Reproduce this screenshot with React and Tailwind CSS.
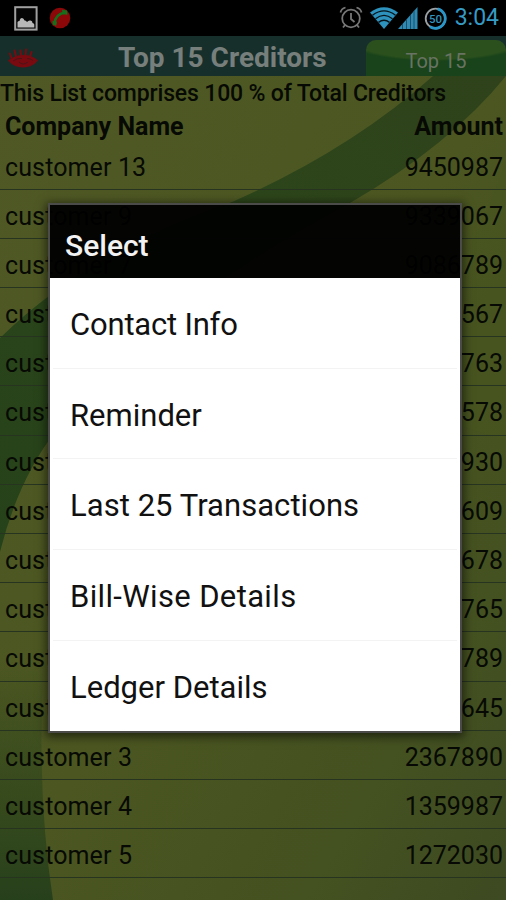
const ROWS = [
  ["customer 13", "9450987"],
  ["customer 9", "9339067"],
  ["customer 7", "9086789"],
  ["customer 2", "8234567"],
  ["customer 8", "7865763"],
  ["customer 6", "6734578"],
  ["customer 1", "5678930"],
  ["customer 10", "4567609"],
  ["customer 11", "4345678"],
  ["customer 12", "3456765"],
  ["customer 14", "3245789"],
  ["customer 15", "2845645"],
  ["customer 3", "2367890"],
  ["customer 4", "1359987"],
  ["customer 5", "1272030"],
];

const OPTIONS = [
  { label: "Contact Info", tracking: "tracking-[-0.2px]" },
  { label: "Reminder", tracking: "tracking-normal" },
  { label: "Last 25 Transactions", tracking: "tracking-[0.05px]" },
  { label: "Bill-Wise Details", tracking: "tracking-[0.35px]" },
  { label: "Ledger Details", tracking: "tracking-normal" },
];

const GalleryIcon = () => (
  <svg width="24" height="25" viewBox="0 0 24 25">
    <rect x="1.2" y="1.2" width="21.4" height="22.4" fill="#050505" stroke="#a0a0a0" strokeWidth="2" />
    <path d="M3.500 21.500V16q.5-1 2-1 .5-3 2.500-3 1.800 0 2.500 2.500 1.500-.5 2.500 1.500 1.500-2 3.500-1.500 2 .3 2 2.500 1.500 0 1.800 1.500v3z" fill="#b8b8b8" />
  </svg>
);

const CallIcon = () => (
  <svg width="22" height="22" viewBox="0 0 22 22">
    <circle cx="11" cy="11" r="10.3" fill="#8c0808" />
    <path d="M5.500 16.500C6 10.500 9.500 6.500 16.500 5.500" fill="none" stroke="#14701c" strokeWidth="2.600" />
    <path d="M3.500 13.800l4.500 1-.8 4-3.500-1zM13 2.800l5 .8.5 4.200-4.800-.6z" fill="#14701c" />
  </svg>
);

const AlarmIcon = () => (
  <svg width="24" height="24" viewBox="0 0 24 24" fill="none" stroke="#777" strokeWidth="1.800">
    <circle cx="12" cy="12.500" r="8.800" />
    <path d="M12 7v6l3.500 3M1.500 6.500C2 4 4 2.200 6.500 1.500M17.500 1.500C20 2.200 22 4 22.500 6.500M6 19l-2 2.500M18 19l2 2.500" />
  </svg>
);

const WifiIcon = () => (
  <svg width="28" height="22" viewBox="0 0 28 22">
    <path d="M0 5.500Q14-5 28 5.500L14 22z" fill="#2d92bd" />
    <path d="M2.500 8.200Q14-.5 25.500 8.200M5.500 11.800Q14 5 22.500 11.800M8.500 15.400Q14 11 19.500 15.400" fill="none" stroke="#06131a" strokeWidth="1.400" />
  </svg>
);

const SignalIcon = () => (
  <svg width="20" height="22" viewBox="0 0 20 22">
    <path d="M0 22L19.500 0v22z" fill="#2f89b0" />
    <path d="M4.500 17v5M8.500 12.500V22M12.500 8v14M16 4v18" stroke="#1b506a" strokeWidth="1" />
  </svg>
);

const BatteryIcon = () => (
  <svg width="23" height="23" viewBox="0 0 23 23">
    <circle cx="11.500" cy="11.500" r="9.800" fill="none" stroke="#9aa0a3" strokeWidth="1.800" />
    <path d="M13.500 1.800A9.900 9.900 0 1 1 6 19.800" fill="none" stroke="#2a96c8" strokeWidth="2.800" />
    <text x="11.500" y="15.500" textAnchor="middle" fontSize="11.500" fontWeight="500" fontFamily="Roboto, sans-serif" fill="#3293bd">50</text>
  </svg>
);

const EyeLogo = () => (
  <svg width="31" height="21" viewBox="0 0 31 21">
    <path d="M0 12.500Q7 7 15.500 7T30 12.500Q24 19.500 15 19.500T0 12.500z" fill="#790b10" />
    <path d="M3.500 10L1.800 5.500M8 8L6.500 2.500M13 7l-.6-4.500M17.500 7l.5-5.500M22 8.500l1.500-4.500" stroke="#790b10" strokeWidth="2" strokeLinecap="round" />
    <path d="M5 13q5-3.500 9-2.500M19 10.500q4 0 6 2M11 14q4 4 9 0" fill="none" stroke="#4a1418" strokeWidth="1" />
  </svg>
);

const Backdrop = () => (
  <svg className="absolute inset-0 -z-10" width="506" height="824" viewBox="0 76 506 824">
    <defs>
      <linearGradient id="field" x1="0" y1="0" x2="1" y2="1">
        <stop offset="0" stopColor="#505925" />
        <stop offset="0.5" stopColor="#4b5621" />
        <stop offset="0.8" stopColor="#445120" />
        <stop offset="1" stopColor="#3d4a22" />
      </linearGradient>
      <linearGradient id="band" x1="1" y1="0" x2="0" y2="1">
        <stop offset="0" stopColor="#2f421b" />
        <stop offset="0.5" stopColor="#2c461a" />
        <stop offset="1" stopColor="#26421a" />
      </linearGradient>
      <linearGradient id="corner" x1="0" y1="0" x2="0" y2="1">
        <stop offset="0" stopColor="#2c441a" stopOpacity="0" />
        <stop offset="0.5" stopColor="#2c441a" stopOpacity="0.6" />
        <stop offset="1" stopColor="#27401c" />
      </linearGradient>
    </defs>
    <path d="M0 76h506v824H0z" fill="url(#field)" />
    <path d="M506 160Q490 210 466 255L440 420 506 440z" fill="#48551f" opacity="0.6" />
    <path d="M433 76Q350 150 232 202Q90 250 0 338V552Q18 480 55 432Q150 310 350 203Q450 145 506 76z" fill="url(#band)" />
    <path d="M0 660H44Q36 790 53 900H0z" fill="url(#corner)" />
  </svg>
);

const StatusBar = () => (
  <div className="flex h-9 items-center bg-black">
    <div className="flex flex-1 items-center gap-[11px] pl-3.5">
      <GalleryIcon />
      <CallIcon />
    </div>
    <div className="flex items-center pr-[7px]">
      <AlarmIcon />
      <div className="ml-[7px] flex items-center"><WifiIcon /><SignalIcon /></div>
      <div className="ml-1.5"><BatteryIcon /></div>
      <span className="ml-2 text-[23px] leading-[38px] text-[#359bc5]">3:04</span>
    </div>
  </div>
);

const TitleBar = () => (
  <div className="flex h-10 bg-[#172f2b]">
    <div className="flex w-[118px] items-center pl-2 pt-1"><EyeLogo /></div>
    <h1 className="w-[248px] whitespace-nowrap text-[28px] font-bold leading-[44px] text-[#777f7c]">Top 15 Creditors</h1>
    <div className="mt-1 flex flex-1 justify-center rounded-t-[10px] bg-[radial-gradient(ellipse_90px_21px_at_50%_0,#2b501d_90%,#19431a_100%)] text-[20px] leading-[42px] text-[#687363]">
      Top 15
    </div>
  </div>
);

const SelectDialog = () => (
  <div className="absolute left-12 top-[203px] w-[414px] border-2 border-[#4b4c49] shadow-[0_2px_9px_2px_rgba(0,0,0,0.55)]">
    <h2 className="h-[73px] bg-black/94 pl-[15px] text-[30px] font-medium leading-[81px] text-[#f2f2f2]">Select</h2>
    <ul className="bg-white px-[3px]">
      {OPTIONS.map(({ label, tracking }) => (
        <li key={label} className={`h-[90.7px] border-b border-[#f3f3f3] pl-[17px] text-[31px] leading-[93px] text-[#111] last:border-0 ${tracking}`}>
          {label}
        </li>
      ))}
    </ul>
  </div>
);

export default function App() {
  return (
    <div className="relative h-[900px] w-[506px] overflow-hidden font-['Roboto',sans-serif]">
      <StatusBar />
      <TitleBar />
      <main className="relative isolate h-[824px] text-[#070a04]">
        <Backdrop />
        <p className="h-[33px] whitespace-nowrap text-[23px] font-medium leading-[35px] tracking-[-0.16px]">This List comprises 100 % of Total Creditors</p>
        <div className="flex h-[31.5px] justify-between pl-[5px] pr-[3px] text-[25px] font-bold leading-[35px]">
          <span>Company Name</span>
          <span>Amount</span>
        </div>
        {ROWS.map(([name, amount]) => (
          <div key={name} className="flex h-[49.2px] justify-between border-b border-[#263420] pl-[5px] pr-[3px] text-[25px] leading-[53px]">
            <span className="tracking-[0.12px]">{name}</span>
            <span>{amount}</span>
          </div>
        ))}
      </main>
      <SelectDialog />
    </div>
  );
}
